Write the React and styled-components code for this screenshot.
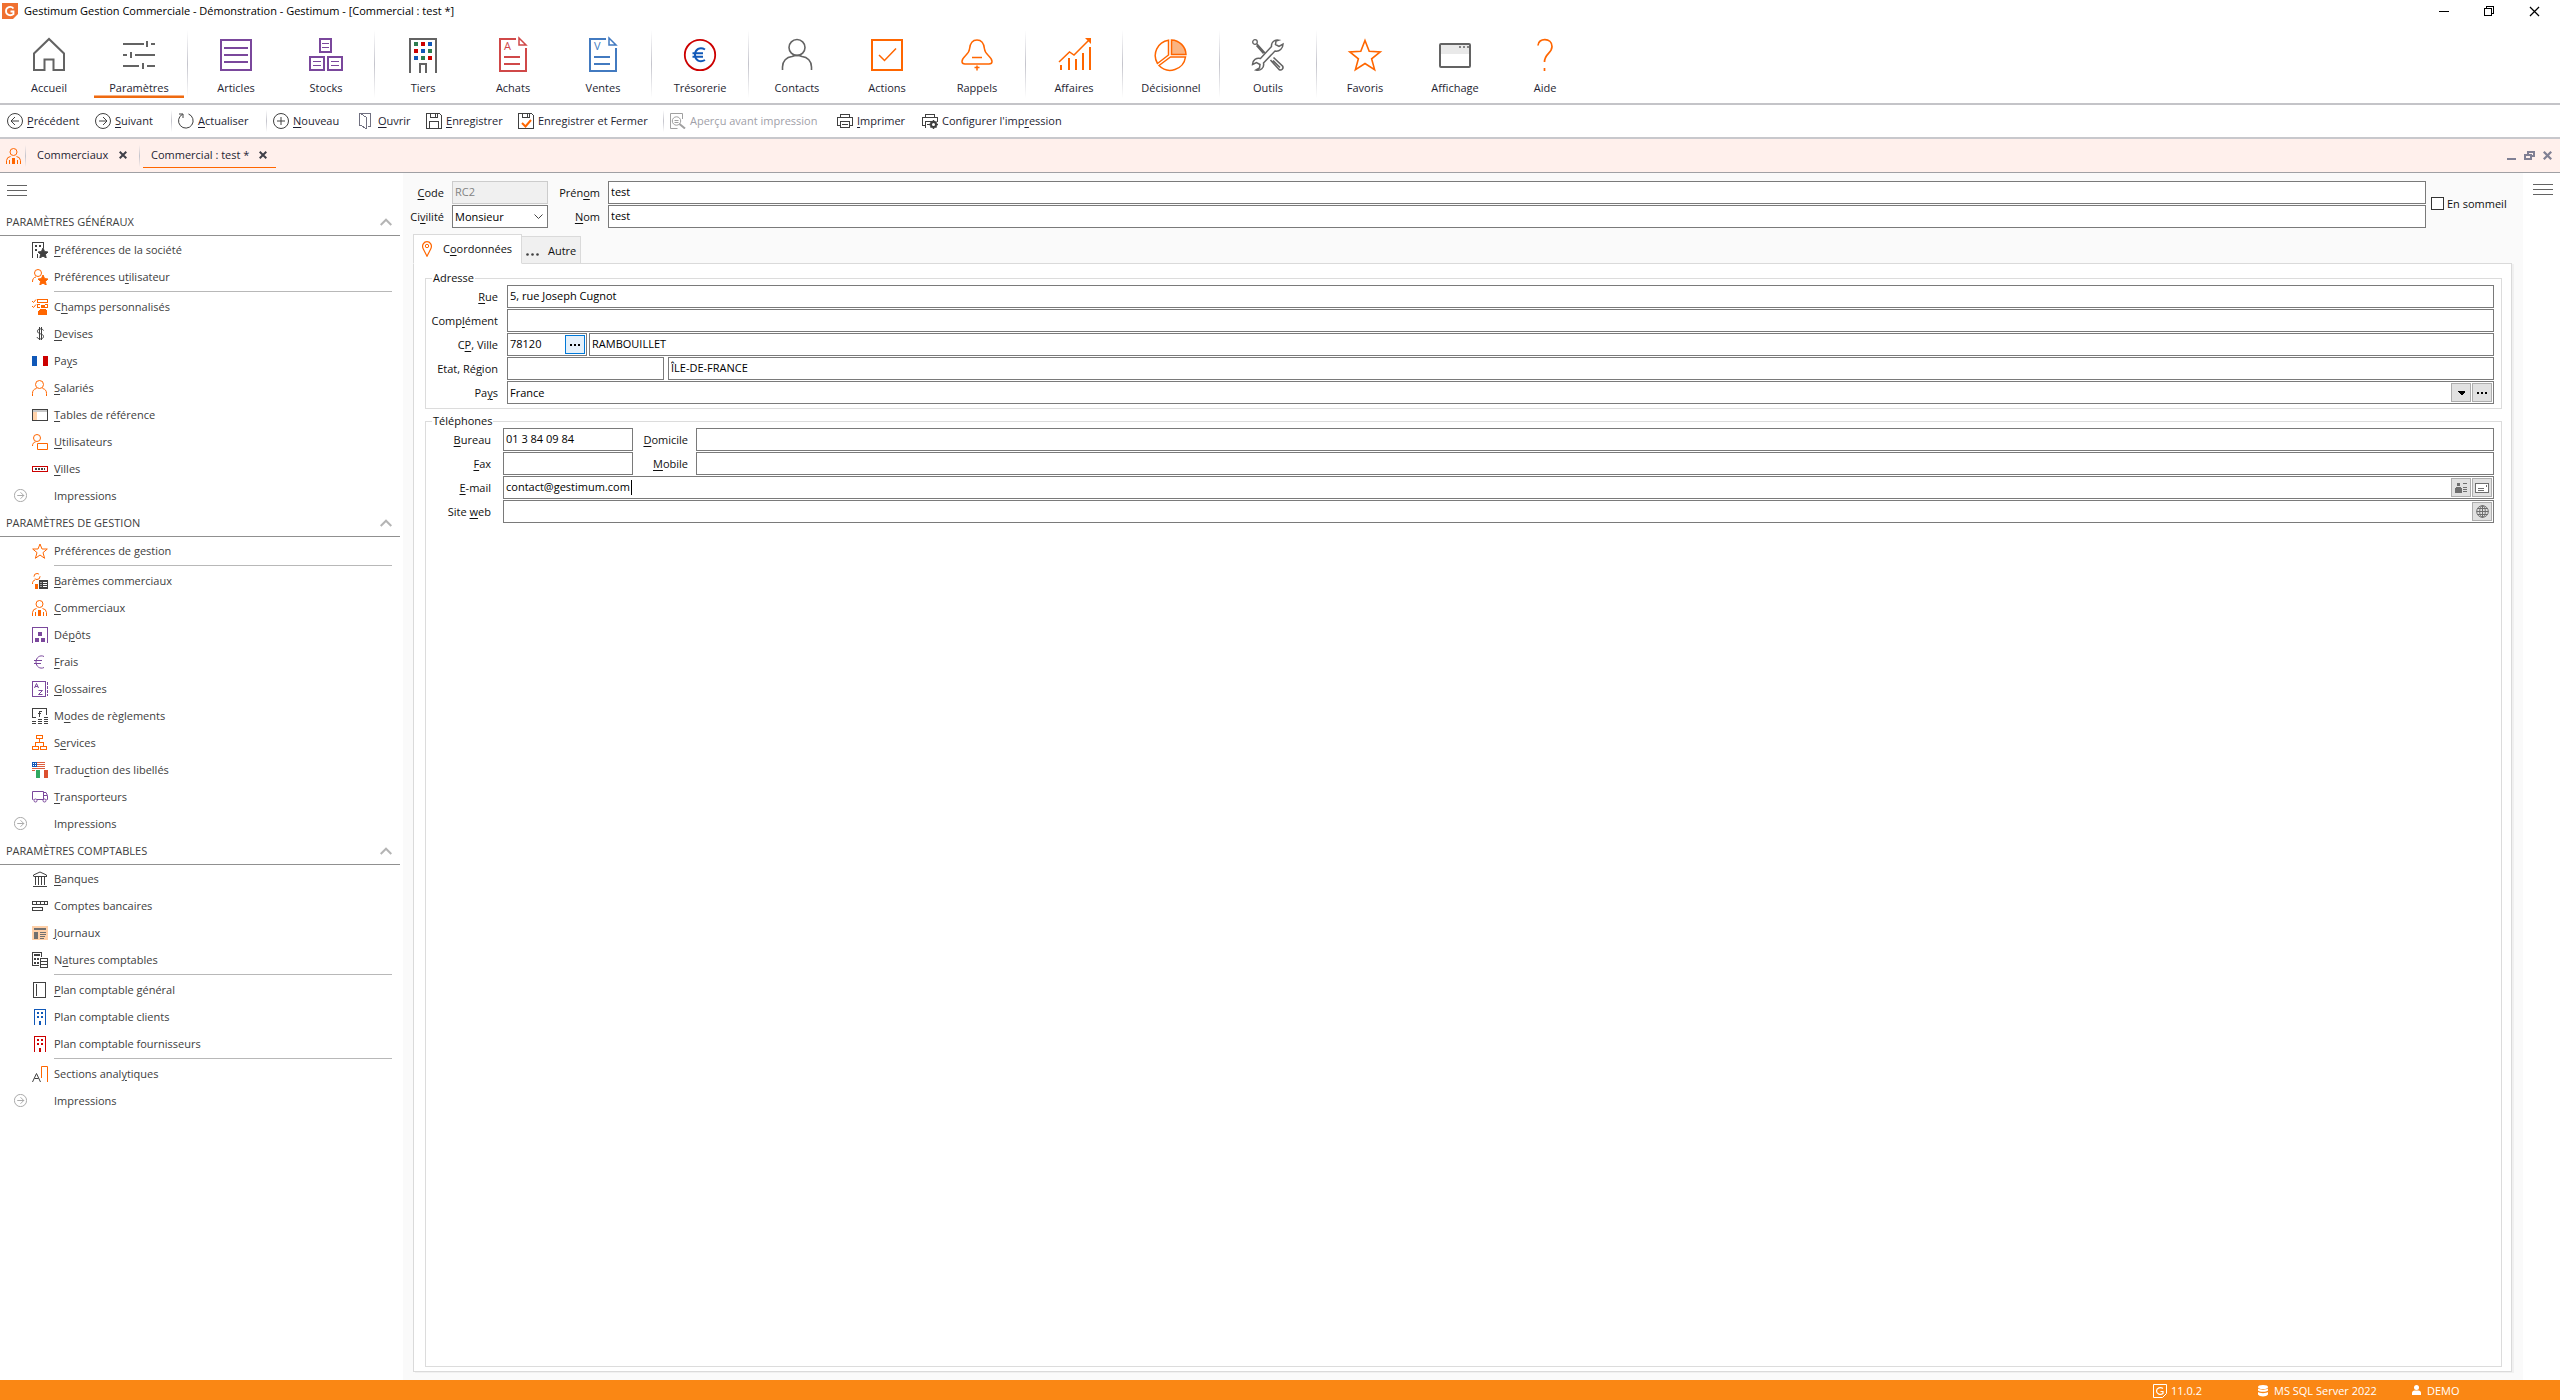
import React from 'react'
import styled, { createGlobalStyle, css } from 'styled-components'

const ORANGE = '#ff6600'
const GREY = '#636363'
const DARK = '#404040'
const PURPLE = '#7a479c'
const BLUE = '#1058b8'
const RED = '#cc0000'

const GlobalStyle = createGlobalStyle`
  * {
    box-sizing: border-box;
  }

  body {
    margin: 0;
    background: white;
    font-family: 'Open Sans', 'Noto Sans', sans-serif;
    font-size: 11px;
    line-height: 16px;
    color: #101010;
  }

  button,
  input,
  select {
    font: inherit;
    color: inherit;
  }

  u {
    text-underline-offset: 2px;
  }
`

/* ---------- layout ---------- */

const Window = styled.div`
  display: flex;
  flex-direction: column;
  min-height: 100vh;
`

const TitleBar = styled.header`
  display: flex;
  align-items: center;
  gap: 6px;
  height: 24px;
  padding: 0 20px 2px 2px;
  color: black;
`

const Title = styled.h1`
  margin: 0;
  flex: 1;
  font-size: 11px;
  font-weight: 400;
`

const WindowButtons = styled.div`
  display: flex;
  gap: ${(p) => p.$gap}px;
  margin-left: auto;
`

const IconButton = styled.button`
  display: flex;
  align-items: center;
  justify-content: center;
  padding: 0;
  border: 0;
  background: none;
  cursor: pointer;
`

const Ribbon = styled.nav`
  display: flex;
  height: 81px;
  padding: 6px 4px 5px;
  border-bottom: 2px solid #c4c4c8;
`

const RibbonButton = styled.button`
  display: flex;
  flex-direction: column;
  align-items: center;
  gap: 8px;
  width: 90px;
  padding: 6px 0 1px;
  border: 0;
  border-bottom: 2px solid transparent;
  background: none;
  color: #1e1e32;
  line-height: 14px;
  cursor: pointer;

  ${(p) =>
    p.$active &&
    css`
      border-color: #ee6a10;
      box-shadow: inset 0 -1px 0 #fab080;
    `}
`

const Divider = styled.span`
  flex: none;
  width: 1px;
  margin: 0 ${(p) => p.$right}px 0 ${(p) => p.$left}px;
  background: linear-gradient(#ffffff00, #c4c4cc, #ffffff00);
`

const ActionBar = styled.div`
  display: flex;
  height: 34px;
  padding: 5px 7px;
  border-bottom: 2px solid #c8c8cc;
`

const ActionButton = styled.button`
  display: flex;
  align-items: center;
  gap: 4px;
  width: ${(p) => p.$width}px;
  padding: 0;
  border: 0;
  background: none;
  color: #1e1e32;
  white-space: nowrap;
  cursor: pointer;

  &:disabled {
    color: #a0a0a8;
  }
`

const TabStrip = styled.div`
  display: flex;
  align-items: center;
  height: 34px;
  padding: 0 8px 0 6px;
  border-bottom: 1px solid #a0a0a4;
  background: #fff0ec;

  ${Divider} {
    height: 22px;
  }
`

const DocumentTab = styled.div`
  display: flex;
  align-items: center;
  justify-content: space-between;
  width: ${(p) => p.$width}px;
  height: 24px;
  padding: 0 9px 0 8px;
  border-bottom: 1px solid ${(p) => (p.$active ? ORANGE : 'transparent')};
  color: #1e1e32;
`

const Workspace = styled.div`
  display: flex;
  flex: 1;
`

const Sidebar = styled.aside`
  width: 403px;
  flex: none;
  color: ${DARK};
`

const SidebarTop = styled.div`
  display: flex;
  align-items: center;
  height: 35px;
  padding: 0 7px;
`

const SectionHeader = styled.button`
  display: flex;
  align-items: center;
  justify-content: space-between;
  width: 400px;
  height: 28px;
  padding: 0 8px 0 6px;
  border: 0;
  border-bottom: 1px solid #909090;
  background: none;
  cursor: pointer;
`

const MenuList = styled.ul`
  list-style: none;
  margin: 0;
  padding: 0;
`

const MenuRow = styled.li`
  display: flex;
  height: ${(p) => (p.$ruled ? 30 : 27)}px;
  ${(p) =>
    p.$ruled &&
    css`
      background: linear-gradient(#b8b8b8, #b8b8b8) 54px 28px / 338px 1px no-repeat;
    `}
`

const MenuLink = styled.a`
  display: flex;
  align-items: center;
  gap: 6px;
  height: 27px;
  padding-left: ${(p) => (p.$printing ? 14 : 32)}px;
  color: inherit;
  text-decoration: none;

  & > svg {
    margin-right: ${(p) => (p.$printing ? 21 : 0)}px;
  }
`

const Main = styled.main`
  display: flex;
  flex-direction: column;
  flex: 1;
  padding: 8px 0;
  background: #fafafa;
`

const RightRail = styled.aside`
  width: 37px;
  padding: 11px 0 0 10px;
`

/* ---------- form ---------- */

const Identity = styled.section`
  display: flex;
  align-items: center;
  margin-bottom: 6px;
`

const Stack = styled.div`
  display: flex;
  flex-direction: column;
  flex: 1;
  gap: 1px;
`

const Row = styled.div`
  display: flex;
  height: 23px;
`

const Label = styled.label`
  flex: none;
  width: ${(p) => p.$width}px;
  padding-right: ${(p) => p.$gap || 8}px;
  line-height: 23px;
  text-align: right;
  white-space: nowrap;
`

const Field = styled.div`
  display: flex;
  flex: ${(p) => (p.$width ? 'none' : 1)};
  width: ${(p) => (p.$width ? p.$width + 'px' : 'auto')};
  margin-right: ${(p) => p.$after || 0}px;
  padding: 1px;
  gap: 1px;
  border: 1px solid ${(p) => (p.$disabled ? '#cccccc' : '#7a7a7a')};
  background: ${(p) => (p.$disabled ? '#f0f0f0' : 'white')};
`

const Input = styled.input`
  flex: 1;
  min-width: 0;
  padding: 0 0 1px 1px;
  border: 0;
  outline: 0;
  background: none;
  color: black;

  &:disabled {
    color: #838383;
  }
`

const EmailInput = styled(Input)`
  flex: none;
  field-sizing: content;
`

const Caret = styled.span`
  width: 1px;
  margin: 2px auto 2px 0;
  background: black;
`

const Select = styled.select`
  flex: 1;
  appearance: none;
  padding: 0 0 0 1px;
  border: 0;
  outline: 0;
  background: none;
  color: black;
`

const SelectArrow = styled.span`
  display: flex;
  align-items: center;
  padding-right: 3px;
  pointer-events: none;
`

const FieldButton = styled.button`
  display: flex;
  align-items: center;
  justify-content: center;
  flex: none;
  width: 20px;
  padding: 0;
  border: 1px solid ${(p) => (p.$hot ? '#0078d7' : '#adadad')};
  background: ${(p) => (p.$hot ? '#e5f1fb' : '#e1e1e1')};
`

const CheckLabel = styled.label`
  display: flex;
  align-items: center;
  gap: 3px;
  width: 97px;
  padding: 0 0 2px 5px;
  white-space: nowrap;
`

const Checkbox = styled.input`
  appearance: none;
  width: 13px;
  height: 13px;
  margin: 0;
  border: 1px solid #333333;
  background: white;
`

const PageTabs = styled.div`
  display: flex;
  align-items: flex-end;
  margin-left: 10px;
`

const PageTab = styled.button`
  display: flex;
  align-items: center;
  border: 1px solid #dadada;
  white-space: nowrap;
  ${(p) =>
    p.$active
      ? css`
          gap: 11px;
          width: 109px;
          height: 30px;
          margin-bottom: -1px;
          padding: 0 8px;
          border-bottom-color: white;
          background: white;
          z-index: 1;
        `
      : css`
          gap: 7px;
          width: 59px;
          height: 27px;
          padding: 2px 2px 0 3px;
          border-left: 0;
          border-bottom: 0;
          background: #f0f0f0;
        `}
`

const Page = styled.section`
  display: flex;
  flex-direction: column;
  flex: 1;
  gap: 5px;
  margin: 0 11px 0 10px;
  padding: 7px 9px 4px 11px;
  border: 1px solid #dadada;
  background: white;
  box-shadow: 2px 1px 0 #f0f0f0;
`

const Group = styled.fieldset`
  flex: ${(p) => (p.$fill ? 1 : 'none')};
  min-width: 0;
  margin: 0;
  padding: 0 7px 4px 0;
  border: 1px solid #dcdcdc;
`

const Legend = styled.legend`
  margin-left: 6px;
  padding: 0 1px;
  line-height: 14px;
`

const StatusBar = styled.footer`
  display: flex;
  justify-content: flex-end;
  height: 20px;
  padding: 1px 22px 0 0;
  background: #fa8714;
  color: white;
`

const StatusItem = styled.span`
  display: flex;
  align-items: center;
  gap: ${(p) => p.$gap}px;
  width: ${(p) => p.$width}px;
`

/* ---------- icons ---------- */

const Big = ({ children, color = GREY, sharp }) => (
  <svg
    width='36'
    height='37'
    viewBox='0 0 36 37'
    fill='none'
    stroke={color}
    strokeWidth='2'
    shapeRendering={sharp ? 'crispEdges' : 'auto'}
    aria-hidden='true'
  >
    {children}
  </svg>
)

const Small = ({ children, color = DARK, soft, size = 16 }) => (
  <svg
    width={size}
    height={size}
    viewBox={`0 0 ${size} ${size}`}
    fill='none'
    stroke={color}
    strokeWidth='1'
    shapeRendering={soft ? 'auto' : 'crispEdges'}
    aria-hidden='true'
  >
    {children}
  </svg>
)

const STAR = 'M11 6l1.600 3.600 3.400.4-2.600 2.400.8 3.600-3.200-1.900L7.800 16l.8-3.600L6 10l3.400-.4z'

const WINDOWS = [
  ['#2e7d4f', RED, BLUE],
  [RED, BLUE, '#2e7d4f'],
  [BLUE, '#2e7d4f', RED]
]

const DocumentIcon = ({ letter, color }) => (
  <Big color={color}>
    <path d='M21 3H5v32h26V12M9 21h16M9 28h16' />
    <path d='M24 2v7h7z' strokeWidth='1.5' />
    <text x='9' y='14' fontSize='11' fill={color} stroke='none'>
      {letter}
    </text>
  </Big>
)

const Building = ({ color }) => (
  <Small color={color}>
    <path d='M2.5 16V.5h11V16' />
    <path d='M5 3h2v2H5zM9 3h2v2H9zM5 7h2v2H5zM9 7h2v2H9zM7 12h2v4H7z' fill={color} stroke='none' />
  </Small>
)

const Salesman = () => (
  <Small color={ORANGE} soft>
    <circle cx='7.5' cy='4' r='3.5' />
    <path d='M.5 16v-3.5a4.5 4.5 0 0 1 4-4M14.5 16v-3.5a4.5 4.5 0 0 0-4-4M3.5 12v4M11.5 12v4' />
    <path d='M6 10h3v6H6z' fill={ORANGE} stroke='none' />
  </Small>
)

const ArrowCircle = ({ back, size = 16, color = DARK }) => (
  <svg width={size} height={size} viewBox='0 0 16 16' fill='none' stroke={color} aria-hidden='true'>
    <circle cx='8' cy='8' r='7.5' />
    <path d={back ? 'M12 8H4M8 4L4 8l4 4' : 'M4 8h8M8 4l4 4-4 4'} />
  </svg>
)

const Burger = () => (
  <svg width='20' height='12' shapeRendering='crispEdges' aria-hidden='true'>
    <path d='M0 .5h20M0 5.5h20M0 10.5h20' stroke='#636363' />
  </svg>
)

const Dots = () => (
  <svg width='10' height='2' shapeRendering='crispEdges' aria-hidden='true'>
    <path d='M0 0h2v2H0zM4 0h2v2H4zM8 0h2v2H8z' fill='black' />
  </svg>
)

const Cross = ({ size = 8, width = 2, color = '#404048' }) => (
  <svg width={size} height={size} viewBox='0 0 8 8' aria-hidden='true'>
    <path d='M.7.7l6.6 6.6M7.3.7L.7 7.3' stroke={color} strokeWidth={width} />
  </svg>
)

const ribbon = [
  [
    ['Accueil', <Big><path d='M3 34V17.5L18 3l15 14.5V34H22.5V23.5h-9V34z' /></Big>],
    [
      'Paramètres',
      <Big sharp>
        <path d='M2 8h21M30 8h4M26 5v6M2 19h4M14 19h20M10 16v6M2 30h16M26 30h8M22 27v6' />
      </Big>
    ]
  ],
  [
    ['Articles', <Big color={PURPLE} sharp><path d='M3 4h30v30H3zM6 12h24M6 19h24M6 26h24' /></Big>],
    [
      'Stocks',
      <Big color={PURPLE} sharp>
        <path d='M12 3h11v13H12zM2 21h14v13H2zM20 21h14v13H20z' />
        <path d='M14 7.5h7M14 11.5h7M5 25.5h8M5 29.5h8M23 25.5h8M23 29.5h8' strokeWidth='1' />
      </Big>
    ]
  ],
  [
    [
      'Tiers',
      <Big sharp>
        <path d='M5 37V3h26v34M15 37v-9h6v9' />
        {WINDOWS.map((line, r) =>
          line.map((fill, c) => (
            <rect key={`${r}${c}`} x={9 + c * 7} y={6 + r * 7} width='4' height='4' fill={fill} stroke='none' />
          ))
        )}
      </Big>
    ],
    ['Achats', <DocumentIcon letter='A' color='#d04848' />],
    ['Ventes', <DocumentIcon letter='V' color='#427ac0' />]
  ],
  [
    [
      'Trésorerie',
      <Big color={RED}>
        <circle cx='18' cy='19' r='15.2' strokeWidth='1.8' />
        <path
          d='M23 13.5c-5-3-10-.2-10 5.300s5 8.200 10 5.200M10.500 17.300h10.500M10.500 20.800h10.500'
          stroke={BLUE}
        />
      </Big>
    ]
  ],
  [
    [
      'Contacts',
      <Big>
        <circle cx='18' cy='11.5' r='8' strokeWidth='1.6' />
        <path d='M3.5 34v-3c0-6 4-10 9.5-10.500 3-1.300 7-1.300 10 0C28.500 21 32.500 25 32.500 31v3' strokeWidth='1.6' />
      </Big>
    ],
    [
      'Actions',
      <Big color={ORANGE}>
        <path d='M3 4h30v30H3z' />
        <path d='M10 19l5.5 5.5L27 12.5' strokeWidth='1.5' />
      </Big>
    ],
    [
      'Rappels',
      <Big color={ORANGE}>
        <path
          d='M18 4c-5 0-7 4-7.500 9-.5 6-7.500 7.500-7.500 12.500 0 2 1.500 2.500 3 2.500h24c1.500 0 3-.5 3-2.500 0-5-7-6.500-7.500-12.500C25 8 23 4 18 4zM13 21.500h10'
          strokeWidth='1.5'
        />
        <path d='M18 29.5v5M15.5 31.5h5' strokeWidth='1.5' />
      </Big>
    ]
  ],
  [
    [
      'Affaires',
      <Big color={ORANGE}>
        <path d='M5 34v-5M13 34V22M20 34V23M27 34V17M34 34V11' />
        <path d='M3 26l10.5-10 4.5 3L33 4' strokeWidth='1.5' />
        <path d='M29 2h6v6z' fill={ORANGE} stroke='none' />
      </Big>
    ]
  ],
  [
    [
      'Décisionnel',
      <Big color={ORANGE}>
        <path d='M18.5 4v14.5H33A15 15 0 0 0 18.5 4z' fill='#fab482' strokeWidth='1.5' />
        <path d='M15.5 4.2V19L4.5 27.5A15.5 15.5 0 0 1 15.5 4.2z' strokeWidth='1.5' />
        <path d='M32.5 21H17.5L6 29.5A15.5 15.5 0 0 0 32.5 21z' strokeWidth='1.5' />
      </Big>
    ]
  ],
  [
    [
      'Outils',
      <Big>
        <path
          d='M28.500 4.200c-4-.8-7.500 2.300-7 6.300l-11 12c-4-1-8 1.500-8 6l4-2 3.500 2-.5 3.500-3.500 2c4.500 1 8.500-2 7.500-7l11.500-12c4.500.8 8-2.500 8-7l-4 2.500-3.500-2 .5-3.500z'
          strokeWidth='1.5'
        />
        <circle cx='5' cy='6' r='2.3' strokeWidth='1.3' />
        <path d='M7 8l8 9M6.5 9.5l7 8' strokeWidth='1.5' />
        <path d='M20.5 24l8.5 9.5c2.5 1.5 5-1 3.500-3.500L23.500 21.500M23 24.500l7 7' strokeWidth='1.6' />
      </Big>
    ]
  ],
  [
    [
      'Favoris',
      <Big color={ORANGE}>
        <path d='M18 4.500l4.200 10.800 11 .6-8.600 6.900 3 10.800L18 27.500l-9.600 6.100 3-10.800-8.600-6.900 11-.6z' strokeWidth='1.6' />
      </Big>
    ],
    [
      'Affichage',
      <Big>
        <path d='M3 9h30v9H3z' fill='#e9e9e9' stroke='none' />
        <rect x='3' y='8' width='30' height='23' rx='1' />
        <path d='M22 11h2M26 11h2M30 11h2' strokeWidth='1.5' />
      </Big>
    ],
    [
      'Aide',
      <Big color={ORANGE}>
        <path d='M11 9.500C11 1.500 25 1.500 25 10.500c0 7-7.500 7-7.500 15.500M17.500 32v3' strokeWidth='1.7' />
      </Big>
    ]
  ]
]

const SaveIcon = ({ tick }) => (
  <Small>
    <path d='M.5.5h13l2 2v13H.5zM4.5.5v4h7v-4M9.5 1v3' />
    {tick ? (
      <path d='M4 10l3.5 3.5L13 7' stroke={ORANGE} strokeWidth='2' shapeRendering='auto' />
    ) : (
      <path d='M3.5 15V8.5h9V15' />
    )}
  </Small>
)

const PrinterIcon = ({ gear }) => (
  <Small>
    <path d='M3.5 4V1.5h9V4M3 12.5H.5v-8h15v4M3.5 14.5v-6h9M5 11.5h3' />
    {gear ? (
      <g shapeRendering='auto'>
        <circle cx='11.5' cy='11.5' r='2.5' strokeWidth='2' />
        <path d='M11.5 7v2M11.5 14v2M7 11.5h2M14 11.5h2M8.5 8.500l1.200 1.200M13.300 13.300l1.200 1.200M8.500 14.500l1.200-1.200M13.300 9.700l1.200-1.200' strokeWidth='1.5' />
      </g>
    ) : (
      <path d='M3.5 14.5h9v-6M15.5 8v4.5H13M5 11.5h6' />
    )}
  </Small>
)

const actions = [
  ['&Précédent', 88, <ArrowCircle back />],
  ['&Suivant', 76, <ArrowCircle />],
  null,
  ['&Actualiser', 88, <Small soft><path d='M10.5 1a7.300 7.300 0 1 1-6 .3M1 1h4v4' /></Small>],
  null,
  ['&Nouveau', 85, <Small soft><circle cx='8' cy='8' r='7.5' /><path d='M8 4v8M4 8h8' /></Small>],
  ['&Ouvrir', 68, <Small color='#707080'><path d='M3 12.5H1.5V.5h11v12M3 1l5 3v11.5l-5-3M10 13.5h3' /></Small>],
  ['&Enregistrer', 92, <SaveIcon />],
  ['Enregistrer et Fermer', 145, <SaveIcon tick />],
  null,
  [
    'Aperçu avant impression',
    167,
    <Small color='#a0a0a0' soft>
      <path d='M12.5 6V.5H.5v15h7' />
      <circle cx='6.5' cy='8' r='4.2' />
      <path d='M9.5 11l5.5 4.5' strokeWidth='2' />
      <path d='M4.5 7.5h4M4.5 9.5h4' />
    </Small>
  ],
  ['&Imprimer', 85, <PrinterIcon />],
  ["Configurer l'imp&ression", 150, <PrinterIcon gear />]
]

const menus = [
  {
    title: 'PARAMÈTRES GÉNÉRAUX',
    items: [
      [
        '&Préférences de la société',
        <Small>
          <path d='M.5 16V.5h11V6M5.5 12v4' />
          <path d='M3 3h2v2H3zM7 3h2v2H7zM3 7h2v2H3z' fill={DARK} stroke='none' />
          <path d={STAR} fill={DARK} shapeRendering='auto' />
        </Small>
      ],
      [
        'Préférences u&tilisateur',
        <Small color={ORANGE} soft>
          <circle cx='6' cy='4' r='3.5' />
          <path d='M.5 13c0-3 1-4.500 3.500-5' />
          <path d={STAR} fill={ORANGE} />
        </Small>,
        true
      ],
      [
        'C&hamps personnalisés',
        <Small color={ORANGE}>
          <path d='M5.5.5h10v3h-10zM8 5.5H5.5v3H8M13 5.5h2.5v3H13' />
          <path d='M0 2l1.5 1.5L4 .5M0 7l1.5 1.5L4 5.5' shapeRendering='auto' />
          <path d='M9 6h4v3H9zM8 10h6l1 2v4H6v-4z' fill={ORANGE} stroke='none' />
        </Small>
      ],
      [
        '&Devises',
        <Small soft>
          <path d='M11.5 4.500c-.5-2-6-2.500-6 .7 0 3.300 6 2 6 5.300s-6 3-6.500.5M7.500 1v13M9.500 1v13' />
        </Small>
      ],
      [
        'Pa&ys',
        <Small>
          <path d='M0 3h5v10H0z' fill={BLUE} stroke='none' />
          <path d='M11 3h5v10h-5z' fill={RED} stroke='none' />
        </Small>
      ],
      [
        '&Salariés',
        <Small color={ORANGE} soft>
          <circle cx='7.5' cy='4.5' r='4' />
          <path d='M.5 16v-2.500a5 5 0 0 1 4-5M14.500 16v-2.500a5 5 0 0 0-4-5' />
        </Small>
      ],
      [
        '&Tables de référence',
        <Small>
          <path d='M0 2h16v3H0z' fill='#c8c8c8' stroke='none' />
          <path d='M1 5h4v8H1z' fill='#ffd2aa' stroke='none' />
          <path d='M.5 2.5h15v11H.5z' />
        </Small>
      ],
      [
        '&Utilisateurs',
        <Small color={ORANGE} soft>
          <circle cx='5' cy='4' r='3.5' />
          <path d='M.5 12c0-2.500 1-3.500 3-4M5.500 9.500h10v6h-10z' />
        </Small>
      ],
      [
        '&Villes',
        <Small>
          <rect x='.5' y='5.5' width='15' height='5' rx='1' stroke={RED} />
          <path d='M3 8h10' strokeWidth='2' strokeDasharray='2 1' />
        </Small>
      ]
    ]
  },
  {
    title: 'PARAMÈTRES DE GESTION',
    items: [
      [
        'Préférences de &gestion',
        <Small color={ORANGE} soft>
          <path d='M8 1l2 5h5.300l-4.300 3.600 1.600 5.700L8 12l-4.600 3.300L5 9.600.7 6H6z' />
        </Small>,
        true
      ],
      [
        '&Barèmes commerciaux',
        <Small color={ORANGE} soft>
          <circle cx='5' cy='3.5' r='3' strokeDasharray='7 2' />
          <path d='M.5 11c0-2.500.7-3.500 2.500-4' />
          <path d='M3 11h3v5H3z' fill={ORANGE} stroke='none' />
          <path d='M7 7h9v9H7z' fill={DARK} stroke='none' />
          <path d='M8.5 9.5h1M11 9.5h4M8.5 11.5h1M11 11.5h4M8.5 13.5h1M11 13.5h4' stroke='white' />
        </Small>
      ],
      ['&Commerciaux', <Salesman />],
      [
        'Dé&pôts',
        <Small color={PURPLE}>
          <path d='M.5 16V.5h15V16' />
          <path d='M6 5h4v4H6zM3 11h4v4H3zM9 11h4v4H9z' fill={PURPLE} stroke='none' />
        </Small>
      ],
      [
        '&Frais',
        <Small color={PURPLE} soft>
          <path d='M12 2.500C8 .5 4 3.500 4 8s4 7.500 8 5.500M2 6.500h8M2 9.500h7' />
        </Small>
      ],
      [
        '&Glossaires',
        <Small color={PURPLE}>
          <path d='M.5.5h13v15H.5z' />
          <path d='M15.5 1v14' strokeDasharray='3 1' />
          <path d='M2.5 7l2-4.500 2 4.500M3 5.500h3M6.500 9.500h4l-4 4h4' shapeRendering='auto' />
        </Small>
      ],
      [
        'M&odes de règlements',
        <Small>
          <path d='M4 9.5H.5v-9h14V7M9.5 3.5h-2v5M6 5.5h3' />
          <path d='M0 13.5h4M6 13.5h4M12 13.5h4M0 15.5h4M6 15.5h4M12 15.5h4M6 11.5h4M12 11.5h4M12 9.5h4' />
        </Small>
      ],
      [
        'S&ervices',
        <Small color={ORANGE}>
          <path d='M4.5.5h6v3h-6zM.5 11.5h6v3h-6zM8.5 11.5h6v3h-6zM7.5 4v4M3.5 11V7.5h8V11' />
        </Small>
      ],
      [
        'Tradu&ction des libellés',
        <Small>
          <path d='M5 .5h8M5 2.5h8M5 4.5h8M0 6.5h13M0 8.5h3' stroke='#dc5f40' />
          <path d='M0 0h5v5H0z' fill={BLUE} stroke='none' />
          <path d='M1 1.5h1M3 1.5h1M1 3.5h1M3 3.5h1' stroke='white' />
          <path d='M4 8h4v8H4z' fill='#30a860' stroke='none' />
          <path d='M8 8h4v8H8z' fill='white' stroke='none' />
          <path d='M12 8h4v8h-4z' fill='#dc5030' stroke='none' />
        </Small>
      ],
      [
        '&Transporteurs',
        <Small color={PURPLE} soft>
          <path d='M1.5 10.5H.5v-8h11v8H5M11.5 3.5h2.5l1.5 3v4h-1M12 6.5h3' />
          <circle cx='3.5' cy='11.5' r='1.5' />
          <circle cx='12.5' cy='11.5' r='1.5' />
        </Small>
      ]
    ]
  },
  {
    title: 'PARAMÈTRES COMPTABLES',
    items: [
      [
        '&Banques',
        <Small>
          <path d='M1.5 5.5h13M3.5 6v8M6.5 6v8M9.5 6v8M12.5 6v8M1 15.5h14' />
          <path d='M1.5 5.5V4L8 1l6.5 3v1.5' shapeRendering='auto' />
        </Small>
      ],
      ['Comptes bancaires', <Small><path d='M.5 3.5h15v3H.5zM.5 9.5h10v3H.5zM4.5 4v3M8.5 4v3M12.5 4v3' /></Small>],
      [
        '&Journaux',
        <Small color='#707070'>
          <path d='M0 1h16v14H0z' fill='#ffd0a8' stroke='none' />
          <path d='M2 3h12v2H2zM2 7h4v7H2z' fill='#707070' stroke='none' />
          <path d='M8 7.5h6M8 9.5h6M8 11.5h5M8 13.5h4' />
        </Small>
      ],
      [
        'N&atures comptables',
        <Small>
          <path d='M7 13.5H.5V.5h9V5M8.5 6.5h7v9h-7zM9 9.5h6M9 12.5h6' />
          <path d='M2 2h6v2H2zM2 6h2v2H2zM5 6h2v2H5zM2 10h2v2H2zM5 10h2v2H5z' fill={DARK} stroke='none' />
        </Small>,
        true
      ],
      ['&Plan comptable général', <Small><path d='M1.5.5h12v15h-12zM4.5 2v12' /></Small>],
      ['Plan comptable clients', <Building color={BLUE} />],
      ['Plan comptable fournisseurs', <Building color={RED} />, true],
      [
        'Sections anal&ytiques',
        <Small soft>
          <path d='M.5 16l4-8.500 4 8.500M2.500 12.500h4' />
          <path d='M9.5 12V.5h6V16' stroke={ORANGE} />
        </Small>
      ]
    ]
  }
]

// "&" precedes the access key letter
const Mnemonic = ({ text }) => {
  const at = text.indexOf('&')
  if (at < 0) return <span>{text}</span>
  return (
    <span>
      {text.slice(0, at)}
      <u>{text[at + 1]}</u>
      {text.slice(at + 2)}
    </span>
  )
}

const TextField = ({ id, label, labelWidth, gap, width, value = '', after, disabled, name, children }) => (
  <>
    {label && (
      <Label htmlFor={id} $width={labelWidth} $gap={gap}>
        <Mnemonic text={label} />
      </Label>
    )}
    <Field $width={width} $after={after} $disabled={disabled}>
      <Input id={id} defaultValue={value} disabled={disabled} aria-label={name} />
      {children}
    </Field>
  </>
)

const SideMenu = () => (
  <Sidebar>
    <SidebarTop>
      <IconButton aria-label='Menu'>
        <Burger />
      </IconButton>
    </SidebarTop>
    {menus.map((menu) => (
      <nav key={menu.title}>
        <SectionHeader>
          {menu.title}
          <svg width='12' height='8' fill='none' aria-hidden='true'>
            <path d='M.7 7L6 1.7 11.3 7' stroke='#b4b4b4' strokeWidth='2' />
          </svg>
        </SectionHeader>
        <MenuList>
          {menu.items.map(([text, icon, ruled]) => (
            <MenuRow key={text} $ruled={ruled}>
              <MenuLink href='#'>
                {icon}
                <Mnemonic text={text} />
              </MenuLink>
            </MenuRow>
          ))}
          <MenuRow>
            <MenuLink href='#' $printing>
              <ArrowCircle size={13} color='#989898' />
              <span>Impressions</span>
            </MenuLink>
          </MenuRow>
        </MenuList>
      </nav>
    ))}
  </Sidebar>
)

const IdentityForm = () => (
  <Identity>
    <Stack>
      <Row>
        <TextField id='code' label='&Code' labelWidth={49} width={96} value='RC2' disabled />
        <TextField id='prenom' label='Prén&om' labelWidth={60} value='test' />
      </Row>
      <Row>
        <Label htmlFor='civilite' $width={49}>
          <Mnemonic text='Ci&vilité' />
        </Label>
        <Field $width={96}>
          <Select id='civilite'>
            <option>Monsieur</option>
            <option>Madame</option>
          </Select>
          <SelectArrow>
            <svg width='9' height='6' fill='none' aria-hidden='true'>
              <path d='M.5.5l4 4 4-4' stroke='#444444' />
            </svg>
          </SelectArrow>
        </Field>
        <TextField id='nom' label='&Nom' labelWidth={60} value='test' />
      </Row>
    </Stack>
    <CheckLabel>
      <Checkbox type='checkbox' />
      En sommeil
    </CheckLabel>
  </Identity>
)

const AddressGroup = () => (
  <Group>
    <Legend>Adresse</Legend>
    <Stack>
      <Row>
        <TextField id='rue' label='&Rue' labelWidth={81} gap={9} value='5, rue Joseph Cugnot' />
      </Row>
      <Row>
        <TextField id='complement' label='Comp&lément' labelWidth={81} gap={9} />
      </Row>
      <Row>
        <TextField id='cp' label='C&P, Ville' labelWidth={81} gap={9} width={80} after={2} value='78120'>
          <FieldButton $hot aria-label='Rechercher'>
            <Dots />
          </FieldButton>
        </TextField>
        <TextField id='ville' name='Ville' value='RAMBOUILLET' />
      </Row>
      <Row>
        <TextField id='etat' label='Etat, Ré&gion' labelWidth={81} gap={9} width={157} after={4} />
        <TextField id='region' name='Région' value='ÎLE-DE-FRANCE' />
      </Row>
      <Row>
        <Label htmlFor='pays' $width={81} $gap={9}>
          <Mnemonic text='Pa&ys' />
        </Label>
        <Field>
          <Select id='pays'>
            <option>France</option>
          </Select>
          <FieldButton aria-label='Dérouler'>
            <svg width='7' height='4' shapeRendering='crispEdges' aria-hidden='true'>
              <path d='M0 0h7v1L4 4H3L0 1z' fill='black' />
            </svg>
          </FieldButton>
          <FieldButton aria-label='Choisir un pays'>
            <Dots />
          </FieldButton>
        </Field>
      </Row>
    </Stack>
  </Group>
)

const PhoneGroup = () => (
  <Group $fill>
    <Legend>Téléphones</Legend>
    <Stack>
      <Row>
        <TextField id='bureau' label='&Bureau' labelWidth={77} gap={12} width={130} value='01 3 84 09 84' />
        <TextField id='domicile' label='&Domicile' labelWidth={63} />
      </Row>
      <Row>
        <TextField id='fax' label='&Fax' labelWidth={77} gap={12} width={130} />
        <TextField id='mobile' label='&Mobile' labelWidth={63} />
      </Row>
      <Row>
        <Label htmlFor='email' $width={77} $gap={12}>
          <Mnemonic text='&E-mail' />
        </Label>
        <Field>
          <EmailInput id='email' defaultValue='contact@gestimum.com' />
          <Caret />
          <FieldButton aria-label='Contacts'>
            <svg width='12' height='10' fill='#6e6e6e' shapeRendering='crispEdges' aria-hidden='true'>
              <path d='M2 0h3v3H2zM1 4h5l1 2v4H0V6zM8 0h4v1H8zM8 4h4v1H8zM8 6h4v1H8zM8 8h4v1H8z' />
            </svg>
          </FieldButton>
          <FieldButton aria-label='Envoyer un e-mail'>
            <svg width='14' height='10' fill='white' stroke='#6e6e6e' shapeRendering='crispEdges' aria-hidden='true'>
              <path d='M.5.5h13v9H.5zM3 5.5h6M3 7.5h6M11.5 2v2' />
            </svg>
          </FieldButton>
        </Field>
      </Row>
      <Row>
        <TextField id='site' label='Site &web' labelWidth={77} gap={12}>
          <FieldButton aria-label='Ouvrir le site'>
            <svg width='13' height='13' fill='none' stroke='#6e6e6e' aria-hidden='true'>
              <circle cx='6.5' cy='6.5' r='5.8' />
              <ellipse cx='6.5' cy='6.5' rx='2.8' ry='5.8' />
              <path d='M.5 6.5h12M6.5.5v12M1.5 3.5h10M1.5 9.5h10' />
            </svg>
          </FieldButton>
        </TextField>
      </Row>
    </Stack>
  </Group>
)

const App = () => (
  <Window>
    <GlobalStyle />
    <TitleBar>
      <svg width='16' height='16' viewBox='0 0 16 16' fill='none' aria-hidden='true'>
        <path d='M0 0h16v11l-5 5H0z' fill='#f07030' />
        <path d='M11.5 5.500C9 2.500 4 4 4 8s4.500 5.500 7.500 3V8.500H8.500' stroke='white' strokeWidth='1.8' />
      </svg>
      <Title>Gestimum Gestion Commerciale - Démonstration - Gestimum - [Commercial : test *]</Title>
      <WindowButtons $gap={35}>
        <IconButton aria-label='Réduire'>
          <svg width='10' height='10' shapeRendering='crispEdges'>
            <path d='M0 5.5h10' stroke='black' />
          </svg>
        </IconButton>
        <IconButton aria-label='Restaurer'>
          <svg width='10' height='10' fill='none' stroke='black' shapeRendering='crispEdges'>
            <path d='M.5 2.5h7v7h-7zM2.5 2V.5h7v7H8' />
          </svg>
        </IconButton>
        <IconButton aria-label='Fermer'>
          <Cross size={11} width={0.9} color='black' />
        </IconButton>
      </WindowButtons>
    </TitleBar>

    <Ribbon>
      {ribbon.map((group, i) => (
        <React.Fragment key={group[0][0]}>
          {i > 0 && <Divider $left={3} $right={3} />}
          {group.map(([text, icon]) => (
            <RibbonButton key={text} $active={text === 'Paramètres'}>
              {icon}
              {text}
            </RibbonButton>
          ))}
        </React.Fragment>
      ))}
    </Ribbon>

    <ActionBar>
      {actions.map((action, i) =>
        action ? (
          <ActionButton key={action[0]} $width={action[1]} disabled={action[0].startsWith('Aperçu')}>
            {action[2]}
            <Mnemonic text={action[0]} />
          </ActionButton>
        ) : (
          <Divider key={i} $left={0} $right={6} />
        )
      )}
    </ActionBar>

    <TabStrip>
      <Salesman />
      <Divider $left={3} $right={3} />
      <DocumentTab $width={107}>
        Commerciaux
        <IconButton aria-label='Fermer Commerciaux'>
          <Cross />
        </IconButton>
      </DocumentTab>
      <Divider $left={3} $right={3} />
      <DocumentTab $width={133} $active>
        Commercial : test *
        <IconButton aria-label='Fermer Commercial'>
          <Cross />
        </IconButton>
      </DocumentTab>
      <WindowButtons $gap={8}>
        <IconButton aria-label='Réduire le document'>
          <svg width='9' height='9'>
            <path d='M0 7h9v2H0z' fill='#808094' />
          </svg>
        </IconButton>
        <IconButton aria-label='Restaurer le document'>
          <svg width='11' height='9' fill='none' stroke='#808094' strokeWidth='2' shapeRendering='crispEdges'>
            <path d='M1 4h6v4H1zM4 3V1h6v4H8' />
          </svg>
        </IconButton>
        <IconButton aria-label='Fermer le document'>
          <Cross size={9} color='#808094' />
        </IconButton>
      </WindowButtons>
    </TabStrip>

    <Workspace>
      <SideMenu />
      <Main>
        <IdentityForm />
        <PageTabs role='tablist'>
          <PageTab role='tab' aria-selected='true' $active>
            <svg width='10' height='16' fill='none' stroke={ORANGE} aria-hidden='true'>
              <path d='M5 15.2L1.300 8C-.7 4 2 .7 5 .7S10.700 4 8.700 8z' strokeWidth='1.2' />
              <circle cx='5' cy='5' r='1.7' />
            </svg>
            <Mnemonic text='C&oordonnées' />
          </PageTab>
          <PageTab role='tab' aria-selected='false'>
            <svg width='16' height='16' fill={DARK} aria-hidden='true'>
              <circle cx='2.5' cy='11.5' r='1.3' />
              <circle cx='7.5' cy='11.5' r='1.3' />
              <circle cx='12.5' cy='11.5' r='1.3' />
            </svg>
            Autre
          </PageTab>
        </PageTabs>
        <Page>
          <AddressGroup />
          <PhoneGroup />
        </Page>
      </Main>
      <RightRail>
        <IconButton aria-label='Volet'>
          <Burger />
        </IconButton>
      </RightRail>
    </Workspace>

    <StatusBar>
      <StatusItem $width={105} $gap={4}>
        <svg width='14' height='14' fill='none' stroke='white' aria-hidden='true'>
          <path d='M.5.5h13v9l-4 4h-9z' />
          <path d='M10 4.500C7.500 2.500 3.500 4 3.500 7s4 4.500 6.500 2.500V7.500H7.500' strokeWidth='1.2' />
        </svg>
        11.0.2
      </StatusItem>
      <StatusItem $width={154} $gap={6}>
        <svg width='10' height='12' fill='white' aria-hidden='true'>
          <ellipse cx='5' cy='2' rx='5' ry='2' />
          <path d='M0 3.500c1.500 1.500 8.500 1.500 10 0v2c-1.500 1.800-8.500 1.800-10 0zM0 7c1.500 1.500 8.500 1.500 10 0v2.500c-1.500 2.500-8.500 2.500-10 0z' />
        </svg>
        MS SQL Server 2022
      </StatusItem>
      <StatusItem $width={126} $gap={6}>
        <svg width='9' height='11' fill='white' aria-hidden='true'>
          <circle cx='4.5' cy='2.5' r='2.5' />
          <path d='M0 10V8c0-1.500 1-2.500 2.500-2.500h4C8 5.500 9 6.500 9 8v2z' />
        </svg>
        DEMO
      </StatusItem>
    </StatusBar>
  </Window>
)

export default App
